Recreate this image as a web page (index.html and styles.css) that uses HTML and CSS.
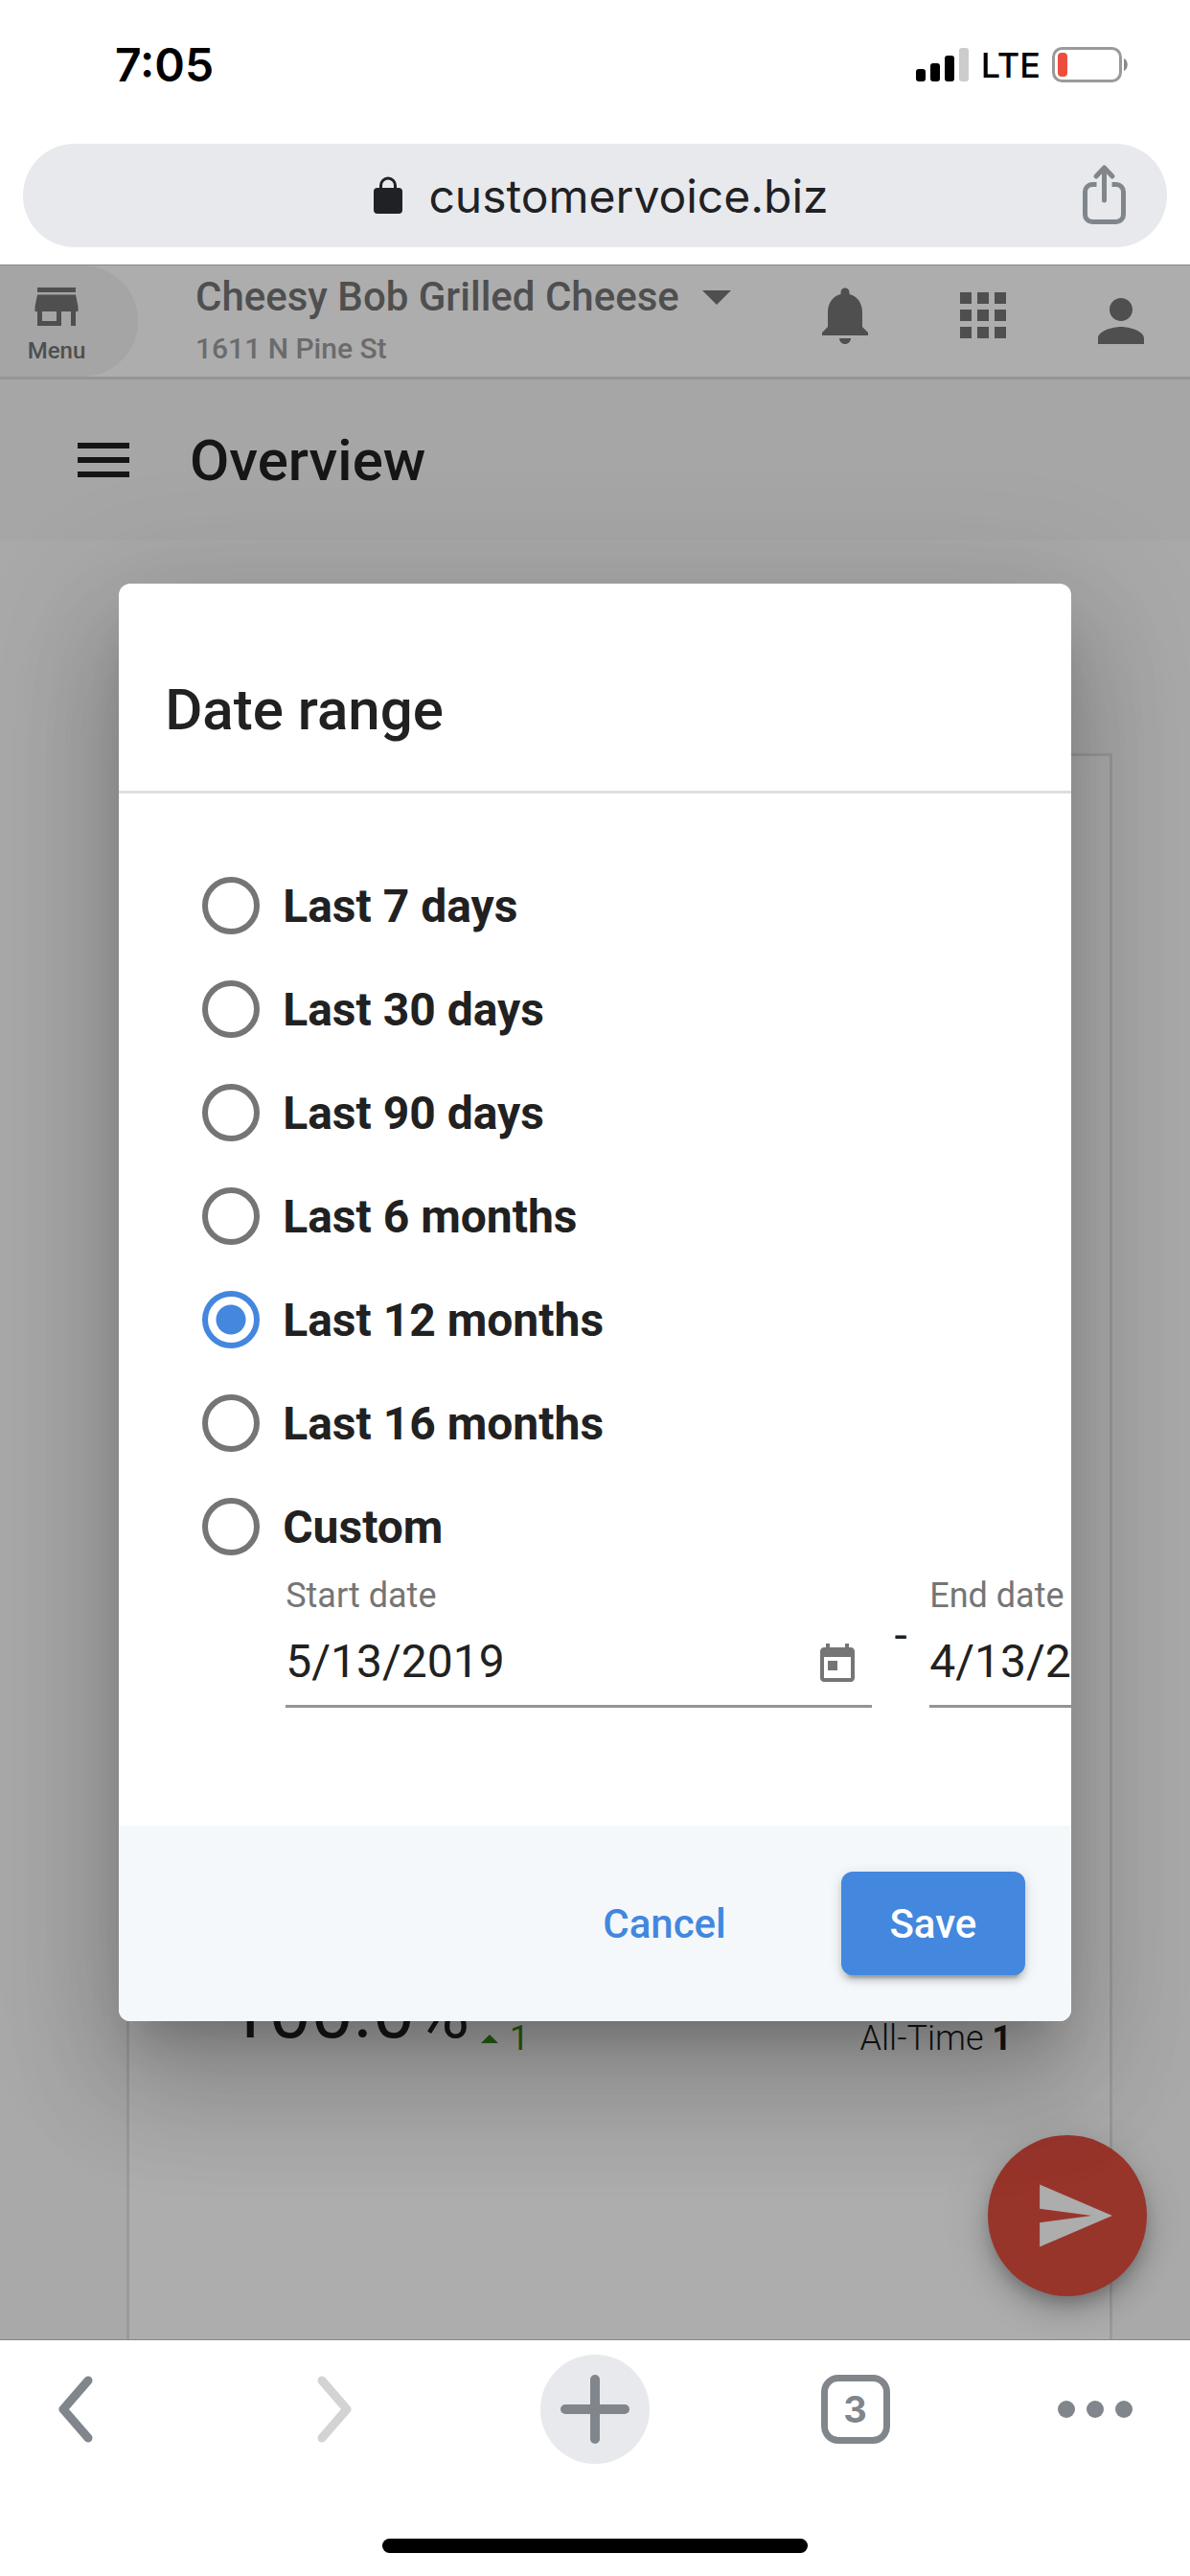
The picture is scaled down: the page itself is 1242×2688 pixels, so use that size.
FILE: index.html
```html
<!DOCTYPE html>
<html lang="en">
<head>
    <meta charset="UTF-8">
    <meta name="viewport" content="width=device-width, initial-scale=1.0">
    <title>Overview - Customer Voice</title>
    <link rel="stylesheet" href="styles.css">
</head>
<body>
    <div class="status-bar">
        <span class="status-time">7:05</span>
        <div class="status-icons">
            <svg width="56" height="36" viewBox="0 0 56 36">
                <rect x="0" y="22" width="10" height="13" rx="3"/>
                <rect x="15" y="16" width="10" height="19" rx="3"/>
                <rect x="30" y="8" width="10" height="27" rx="3"/>
                <rect x="45" y="0" width="10" height="35" rx="3" fill="#ccc"/>
            </svg>
            <span class="status-network">LTE</span>
            <svg width="80" height="38" viewBox="0 0 80 38">
                <rect x="1.5" y="1.5" width="70" height="34" rx="9" fill="none" stroke="#9a9a9a" stroke-width="3"/>
                <rect x="6" y="6" width="10" height="25" rx="4" fill="#eb4e3d"/>
                <path d="M75 12c5 2 5 11 0 13z" fill="#8a8a8a"/>
            </svg>
        </div>
    </div>

    <div class="omnibox">
        <button type="button" class="address">
            <svg width="30" height="40" viewBox="0 0 30 40">
                <path d="M7.500 15V9.500a7.500 7.500 0 0 1 15 0V15" fill="none" stroke="#202124" stroke-width="3"/>
                <rect x="0" y="12" width="30" height="27" rx="4" fill="#202124"/>
            </svg>
            <span>customervoice.biz</span>
        </button>
        <button type="button" class="share" aria-label="Share">
            <svg width="45" height="66" viewBox="0 0 45 66" fill="none" stroke="#80868b" stroke-width="5" stroke-linecap="round" stroke-linejoin="round">
                <path d="M14.500 21.500H10a7.500 7.500 0 0 0-7.500 7.500v24a7.500 7.500 0 0 0 7.500 7.500h25a7.500 7.500 0 0 0 7.500-7.500V29a7.500 7.500 0 0 0-7.500-7.500h-4.500" stroke-linecap="butt"/>
                <path d="M22.500 38V4M14 13l8.500-9 8.500 9"/>
            </svg>
        </button>
    </div>

    <main class="page">
        <header class="app-header">
            <button type="button" class="menu-btn">
                <svg width="60" height="60" viewBox="0 0 24 24"><path d="M20 4H4v2h16V4zm1 10v-2l-1-5H4l-1 5v2h1v6h10v-6h4v6h2v-6h1zm-9 4H6v-4h6v4z"/></svg>
                <span>Menu</span>
            </button>
            <div class="location">
                <button type="button" class="location-name">
                    Cheesy Bob Grilled Cheese
                    <svg width="30" height="15" viewBox="0 0 10 5"><path d="M0 0h10L5 5z"/></svg>
                </button>
                <p class="location-address">1611 N Pine St</p>
            </div>
            <nav class="header-icons">
                <button type="button" aria-label="Notifications">
                    <svg width="72" height="72" viewBox="0 0 24 24"><path d="M12 22c1.1 0 2-.9 2-2h-4c0 1.100.89 2 2 2zm6-6v-5c0-3.070-1.640-5.640-4.500-6.320V4c0-.830-.670-1.500-1.500-1.500s-1.500.67-1.500 1.500v.68C7.630 5.360 6 7.920 6 11v5l-2 2v1h16v-1l-2-2z"/></svg>
                </button>
                <button type="button" aria-label="Apps">
                    <svg width="72" height="72" viewBox="0 0 24 24"><path d="M4 8h4V4H4v4zm6 12h4v-4h-4v4zm-6 0h4v-4H4v4zm0-6h4v-4H4v4zm6 0h4v-4h-4v4zm6-10v4h4V4h-4zm-6 4h4V4h-4v4zm6 6h4v-4h-4v4zm0 6h4v-4h-4v4z"/></svg>
                </button>
                <button type="button" aria-label="Account">
                    <svg width="72" height="72" viewBox="0 -2 24 24"><path d="M12 12c2.210 0 4-1.790 4-4s-1.790-4-4-4-4 1.790-4 4 1.790 4 4 4zm0 2c-2.670 0-8 1.340-8 4v2h16v-2c0-2.660-5.330-4-8-4z"/></svg>
                </button>
            </nav>
        </header>

        <div class="title-bar">
            <button type="button" aria-label="Open navigation">
                <svg width="72" height="72" viewBox="0 0 24 24"><path d="M3 18h18v-2H3v2zm0-5h18v-2H3v2zm0-7v2h18V6H3z"/></svg>
            </button>
            <h1>Overview</h1>
        </div>

        <section class="score-card">
            <div class="score-row">
                <span class="score">100.0%</span>
                <span class="trend">
                    <svg width="18" height="9" viewBox="0 0 18 9"><path d="M0 9h18L9 0z"/></svg>
                    1
                </span>
                <span class="all-time">All-Time <b>1</b></span>
            </div>
        </section>

        <button type="button" class="fab" aria-label="Send">
            <svg width="166" height="166" viewBox="-13 -11 46 46"><path d="M2.010 21L23 12 2.010 3 2 10l15 2-15 2z"/></svg>
        </button>

        <div class="overlay">
            <form class="dialog" role="dialog" aria-labelledby="dialogTitle">
                <div class="dialog-header">
                    <h2 id="dialogTitle">Date range</h2>
                </div>
                <div class="dialog-body">
                    <label class="option"><input type="radio" name="range"> Last 7 days</label>
                    <label class="option"><input type="radio" name="range"> Last 30 days</label>
                    <label class="option"><input type="radio" name="range"> Last 90 days</label>
                    <label class="option"><input type="radio" name="range"> Last 6 months</label>
                    <label class="option"><input type="radio" name="range" checked> Last 12 months</label>
                    <label class="option"><input type="radio" name="range"> Last 16 months</label>
                    <label class="option"><input type="radio" name="range"> Custom</label>

                    <div class="custom-range">
                        <div class="date-field">
                            <label for="startDate">Start date</label>
                            <div class="date-control">
                                <input type="text" id="startDate" value="5/13/2019">
                                <button type="button" aria-label="Choose start date">
                                    <svg width="48" height="48" viewBox="0 0 24 24"><path d="M19 3h-1V1h-2v2H8V1H6v2H5c-1.110 0-1.990.9-1.990 2L3 19c0 1.100.89 2 2 2h14c1.100 0 2-.9 2-2V5c0-1.100-.9-2-2-2zm0 16H5V8h14v11zM7 10h5v5H7z"/></svg>
                                </button>
                            </div>
                        </div>
                        <span class="range-dash">-</span>
                        <div class="date-field">
                            <label for="endDate">End date</label>
                            <div class="date-control">
                                <input type="text" id="endDate" value="4/13/2020">
                            </div>
                        </div>
                    </div>
                </div>
                <div class="dialog-footer">
                    <button type="button" class="cancel-btn">Cancel</button>
                    <button type="submit" class="save-btn">Save</button>
                </div>
            </form>
        </div>
    </main>

    <footer class="toolbar">
        <nav class="toolbar-row">
            <button type="button" aria-label="Back">
                <svg width="37" height="70" viewBox="0 0 37 70" fill="none" stroke="#80868b" stroke-width="9" stroke-linecap="round" stroke-linejoin="round"><path d="M32 5L6 35l26 30"/></svg>
            </button>
            <button type="button" aria-label="Forward">
                <svg width="37" height="70" viewBox="0 0 37 70" fill="none" stroke="#d3d3d3" stroke-width="9" stroke-linecap="round" stroke-linejoin="round"><path d="M5 5l26 30L5 65"/></svg>
            </button>
            <button type="button" class="new-tab" aria-label="New tab">
                <svg width="72" height="72" viewBox="0 0 72 72" fill="none" stroke="#80868b" stroke-width="10" stroke-linecap="round"><path d="M36 5v62M5 36h62"/></svg>
            </button>
            <button type="button" aria-label="Open tabs"><span class="tab-count">3</span></button>
            <button type="button" aria-label="More">
                <svg width="114" height="18" viewBox="0 0 114 18" fill="#80868b"><circle cx="6" cy="9" r="9"/><circle cx="36" cy="9" r="9"/><circle cx="66" cy="9" r="9"/></svg>
            </button>
        </nav>
        <div class="home-indicator"></div>
    </footer>
</body>
</html>
```
FILE: styles.css
```css
* {
    margin: 0;
    padding: 0;
    box-sizing: border-box;
}

body {
    display: flex;
    flex-direction: column;
    min-height: 100vh;
    background: #fff;
    color: #212121;
    font-family: Roboto, 'Liberation Sans', sans-serif;
}

button {
    border: none;
    background: none;
    color: inherit;
    font: inherit;
    cursor: pointer;
}

svg {
    display: block;
    flex: none;
    overflow: visible;
}

/* Phone status bar and address bar */
.status-bar {
    display: flex;
    align-items: center;
    justify-content: space-between;
    height: 135px;
    padding: 0 64px 0 120px;
    color: #000;
    font-family: Inter, sans-serif;
}

.status-time {
    font-size: 48px;
    font-weight: 600;
}

.status-icons {
    display: flex;
    align-items: center;
    gap: 12px;
}

.status-network {
    font-size: 36px;
    font-weight: 500;
}

.omnibox {
    display: grid;
    grid-template-columns: 1fr auto 1fr;
    align-items: center;
    height: 108px;
    margin: 15px 24px 18px;
    padding: 0 43px 0 56px;
    border-radius: 54px;
    background: #e8e9ed;
}

.address {
    display: flex;
    grid-column: 2;
    align-items: center;
    gap: 27px;
    color: #202124;
    font-family: Inter, sans-serif;
    font-size: 48px;
}

.share {
    justify-self: end;
}

/* Web page */
.page {
    display: flex;
    flex: 1;
    flex-direction: column;
    position: relative;
    overflow: hidden;
    border-top: 1px solid #888;
    border-bottom: 1px solid #888;
    background: #fafafa;
}

.app-header {
    display: flex;
    align-items: flex-start;
    height: 119px;
    padding-right: 36px;
    border-bottom: 3px solid #dcdcdc;
    background: #fff;
    color: #757575;
    fill: #757575;
    font-weight: 500;
}

.menu-btn {
    display: flex;
    flex-direction: column;
    align-items: center;
    width: 144px;
    height: 116px;
    padding: 13px 26px 0 0;
    border-radius: 0 58px 58px 0;
    background: #f3f3f3;
    font-size: 24px;
    line-height: 32px;
}

.location {
    flex: 1;
    padding: 6px 0 0 60px;
}

.location-name {
    display: flex;
    align-items: center;
    gap: 24px;
    font-size: 42px;
    line-height: 54px;
}

.location-address {
    margin-top: 9px;
    color: #9e9e9e;
    font-size: 30px;
    line-height: 36px;
}

.header-icons {
    display: flex;
    gap: 72px;
    padding-top: 16px;
}

.title-bar {
    display: flex;
    align-items: center;
    gap: 54px;
    height: 168px;
    padding: 0 72px;
    background: #f5f5f5;
    fill: #212121;
}

.title-bar h1 {
    font-size: 60px;
    font-weight: 500;
}

.score-card {
    display: flex;
    flex: 1;
    flex-direction: column;
    justify-content: flex-end;
    margin: 222px 81px 0 132px;
    padding: 0 102px 290px;
    border: 3px solid #e3e3e3;
    border-bottom: none;
    background: #fff;
}

.score-row {
    display: flex;
    align-items: flex-end;
    gap: 12px;
}

.score {
    font-size: 78px;
    line-height: 102px;
}

.trend {
    display: flex;
    align-items: center;
    gap: 12px;
    color: #38911c;
    fill: #38911c;
    font-size: 36px;
    line-height: 48px;
}

.all-time {
    margin-left: auto;
    font-size: 36px;
    font-weight: 300;
    line-height: 48px;
}

.all-time b {
    font-weight: 700;
}

.fab {
    display: flex;
    position: absolute;
    right: 45px;
    bottom: 45px;
    align-items: center;
    justify-content: center;
    width: 166px;
    height: 168px;
    border-radius: 50%;
    background: #e04f40;
    fill: #fff;
    box-shadow: 0 9px 15px -3px rgba(0,0,0,0.2), 0 18px 30px rgba(0,0,0,0.14), 0 3px 54px rgba(0,0,0,0.12);
}

/* Date range dialog */
.overlay {
    display: flex;
    position: absolute;
    inset: 0;
    align-items: flex-start;
    justify-content: center;
    padding-top: 332px;
    background: rgba(0,0,0,0.32);
}

.dialog {
    width: 80%;
    overflow: hidden;
    border-radius: 12px;
    background: #fff;
    box-shadow: 0 33px 45px -21px rgba(0,0,0,0.2), 0 72px 114px 9px rgba(0,0,0,0.14), 0 27px 138px 24px rgba(0,0,0,0.12);
}

.dialog-header {
    padding: 96px 48px 48px;
    border-bottom: 3px solid #dedede;
}

.dialog-header h2 {
    font-size: 60px;
    font-weight: 500;
    line-height: 72px;
}

.dialog-body {
    padding: 63px 0 123px 87px;
    overflow: hidden;
}

.option {
    display: flex;
    align-items: center;
    gap: 24px;
    height: 108px;
    font-size: 48px;
    font-weight: 700;
}

.option input {
    appearance: none;
    width: 60px;
    height: 60px;
    border: 6px solid #757575;
    border-radius: 50%;
}

.option input:checked {
    border-color: #4387de;
    background: radial-gradient(circle, #4387de 15px, transparent 16px);
}

.custom-range {
    display: flex;
    padding-left: 87px;
}

.date-field {
    flex: 0 0 612px;
    min-width: 0;
}

.date-field label {
    display: block;
    color: #757575;
    font-size: 36px;
    line-height: 36px;
}

.date-control {
    display: flex;
    align-items: flex-end;
    height: 99px;
    padding-right: 12px;
    border-bottom: 3px solid #949494;
    fill: #757575;
}

.date-control input {
    flex: 1;
    width: 100%;
    min-width: 0;
    height: 92px;
    border: none;
    outline: none;
    background: none;
    color: #212121;
    font: inherit;
    font-size: 48px;
}

.date-control button {
    margin-bottom: 18px;
}

.range-dash {
    flex: 0 0 60px;
    margin-top: 36px;
    font-size: 48px;
    line-height: 48px;
    text-align: center;
}

.dialog-footer {
    display: flex;
    justify-content: flex-end;
    gap: 24px;
    padding: 48px;
    background: #f4f8fb;
    font-size: 42px;
    font-weight: 500;
}

.cancel-btn {
    padding: 0 96px;
    color: #4387de;
}

.save-btn {
    width: 192px;
    height: 108px;
    border-radius: 12px;
    background: #4387de;
    color: #fff;
    box-shadow: 0 9px 3px -6px rgba(0,0,0,0.2), 0 6px 6px rgba(0,0,0,0.14), 0 3px 15px rgba(0,0,0,0.12);
}

/* Browser toolbar */
.toolbar {
    display: flex;
    flex-direction: column;
    align-items: center;
    padding: 15px 21px 24px;
}

.toolbar-row {
    display: flex;
    justify-content: space-between;
    width: 100%;
    margin-bottom: 78px;
}

.toolbar-row button {
    display: flex;
    align-items: center;
    justify-content: center;
    width: 114px;
    height: 114px;
}

.toolbar-row .new-tab {
    border-radius: 50%;
    background: #e8e9ed;
}

.tab-count {
    width: 72px;
    height: 72px;
    border: 7px solid #80868b;
    border-radius: 18px;
    color: #80868b;
    font-family: Inter, sans-serif;
    font-size: 38px;
    font-weight: 700;
    line-height: 58px;
}

.home-indicator {
    width: 444px;
    height: 15px;
    border-radius: 8px;
    background: #000;
}
```
